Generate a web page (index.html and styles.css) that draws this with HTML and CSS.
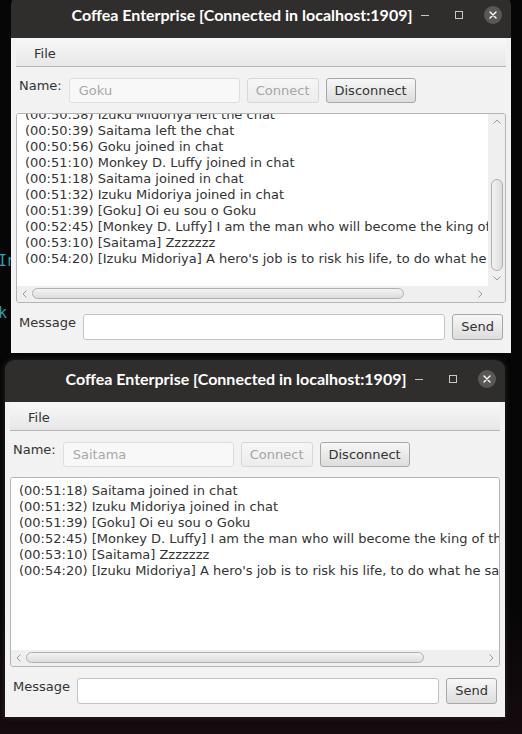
FILE: index.html
```html
<!DOCTYPE html>
<html>
<head>
<meta charset="utf-8">
<title>Coffea Enterprise</title>
<link rel="stylesheet" href="styles.css">
</head>
<body>
<div class="desktop">
  <pre class="terminal">Ir


k</pre>

  <div class="window win-back">
    <div class="titlebar">
      <div class="title">Coffea Enterprise [Connected in localhost:1909]</div>
      <span class="wm-min"></span>
      <span class="wm-max"></span>
      <svg class="wm-close" width="18" height="18" viewBox="0 0 18 18"><circle cx="9" cy="9" r="9" fill="#5a5856"/><path d="M6 6 L12 12 M12 6 L6 12" stroke="#fff" stroke-width="1.4" stroke-linecap="round"/></svg>
    </div>
    <div class="content">
      <div class="menubar"><span class="menu">File</span></div>
      <div class="row name-row">
        <span class="lbl">Name:</span>
        <div class="field field-disabled name-field">Goku</div>
        <div class="btn btn-disabled">Connect</div>
        <div class="btn">Disconnect</div>
      </div>
      <div class="textarea ta-v">
        <div class="viewport">
          <div class="lines scrolled">
            <div class="line">(00:50:38) Izuku Midoriya left the chat</div>
            <div class="line">(00:50:39) Saitama left the chat</div>
            <div class="line">(00:50:56) Goku joined in chat</div>
            <div class="line">(00:51:10) Monkey D. Luffy joined in chat</div>
            <div class="line">(00:51:18) Saitama joined in chat</div>
            <div class="line">(00:51:32) Izuku Midoriya joined in chat</div>
            <div class="line">(00:51:39) [Goku] Oi eu sou o Goku</div>
            <div class="line">(00:52:45) [Monkey D. Luffy] I am the man who will become the king of the pirates!</div>
            <div class="line">(00:53:10) [Saitama] Zzzzzzz</div>
            <div class="line">(00:54:20) [Izuku Midoriya] A hero's job is to risk his life, to do what he says he will do!</div>
          </div>
        </div>
        <div class="vscroll">
          <div class="varrow"><svg width="8" height="5" viewBox="0 0 8 5"><path d="M0.5 4.5 L4 1 L7.5 4.5" fill="none" stroke="#9a9a9a" stroke-width="1"/></svg></div>
          <div class="vtrack"><div class="thumb-v" style="margin-top:49px;height:92px"></div></div>
          <div class="varrow"><svg width="8" height="5" viewBox="0 0 8 5"><path d="M0.5 0.5 L4 4 L7.5 0.5" fill="none" stroke="#9a9a9a" stroke-width="1"/></svg></div>
        </div>
        <div class="hscroll">
          <div class="harrow"><svg width="5" height="8" viewBox="0 0 5 8"><path d="M4.5 0.5 L1 4 L4.5 7.5" fill="none" stroke="#9a9a9a" stroke-width="1"/></svg></div>
          <div class="htrack"><div class="thumb-h" style="width:372px"></div></div>
          <div class="harrow"><svg width="5" height="8" viewBox="0 0 5 8"><path d="M0.5 0.5 L4 4 L0.5 7.5" fill="none" stroke="#9a9a9a" stroke-width="1"/></svg></div>
        </div>
        <div class="corner"></div>
      </div>
      <div class="row msg-row">
        <span class="lbl">Message</span>
        <div class="field msg-field"></div>
        <div class="btn">Send</div>
      </div>
    </div>
  </div>

  <div class="window win-front">
    <div class="titlebar">
      <div class="title">Coffea Enterprise [Connected in localhost:1909]</div>
      <span class="wm-min"></span>
      <span class="wm-max"></span>
      <svg class="wm-close" width="18" height="18" viewBox="0 0 18 18"><circle cx="9" cy="9" r="9" fill="#5a5856"/><path d="M6 6 L12 12 M12 6 L6 12" stroke="#fff" stroke-width="1.4" stroke-linecap="round"/></svg>
    </div>
    <div class="content">
      <div class="menubar"><span class="menu">File</span></div>
      <div class="row name-row">
        <span class="lbl">Name:</span>
        <div class="field field-disabled name-field">Saitama</div>
        <div class="btn btn-disabled">Connect</div>
        <div class="btn">Disconnect</div>
      </div>
      <div class="textarea ta-h">
        <div class="viewport">
          <div class="lines">
            <div class="line">(00:51:18) Saitama joined in chat</div>
            <div class="line">(00:51:32) Izuku Midoriya joined in chat</div>
            <div class="line">(00:51:39) [Goku] Oi eu sou o Goku</div>
            <div class="line">(00:52:45) [Monkey D. Luffy] I am the man who will become the king of the pirates!</div>
            <div class="line">(00:53:10) [Saitama] Zzzzzzz</div>
            <div class="line">(00:54:20) [Izuku Midoriya] A hero's job is to risk his life, to do what he says he will do!</div>
          </div>
        </div>
        <div class="hscroll">
          <div class="harrow"><svg width="5" height="8" viewBox="0 0 5 8"><path d="M4.5 0.5 L1 4 L4.5 7.5" fill="none" stroke="#9a9a9a" stroke-width="1"/></svg></div>
          <div class="htrack"><div class="thumb-h" style="width:398px"></div></div>
          <div class="harrow"><svg width="5" height="8" viewBox="0 0 5 8"><path d="M0.5 0.5 L4 4 L0.5 7.5" fill="none" stroke="#9a9a9a" stroke-width="1"/></svg></div>
        </div>
      </div>
      <div class="row msg-row">
        <span class="lbl">Message</span>
        <div class="field msg-field"></div>
        <div class="btn">Send</div>
      </div>
    </div>
  </div>
</div>
</body>
</html>
```

FILE: styles.css
```css
* { box-sizing: border-box; }
html, body { margin: 0; padding: 0; }
body {
  width: 522px;
  height: 734px;
  overflow: hidden;
  background: linear-gradient(to bottom, #060606 0%, #060606 82%, #160b0e 100%);
  font-family: "DejaVu Sans", sans-serif;
  font-size: 13px;
  color: #333;
}
.desktop {
  position: relative;
  width: 522px;
  height: 734px;
}
.terminal {
  position: absolute;
  left: -2px;
  top: 253px;
  margin: 0;
  font-family: "DejaVu Sans Mono", monospace;
  font-size: 15px;
  line-height: 17.3px;
  letter-spacing: -1px;
  color: #2a9fb2;
}
.window {
  position: absolute;
  width: 500px;
  display: flex;
  flex-direction: column;
}
.win-back { left: 11px; top: -4px; }
.win-front {
  left: 5px;
  top: 360px;
  border-radius: 9px 9px 0 0;
  box-shadow: 0 0 6px rgba(90, 90, 90, 0.35);
}

/* title bar */
.titlebar {
  height: 42px;
  background: #302e2c;
  border-radius: 9px 9px 0 0;
  display: flex;
  align-items: center;
  padding-bottom: 5px;
}
.title {
  margin-left: 60px;
  width: 342px;
  font-family: "Lato", sans-serif;
  font-weight: bold;
  font-size: 16px;
  color: #ffffff;
  white-space: nowrap;
  text-align: center;
}
.wm-min {
  margin-left: 8px;
  margin-top: 2px;
  width: 8px;
  height: 1px;
  background: #c9c9c9;
}
.wm-max {
  margin-left: 26px;
  width: 8px;
  height: 8px;
  border: 1px solid #c9c9c9;
}
.wm-close {
  margin-left: 21px;
  display: block;
}

/* content */
.content {
  background: #f2f2f2;
  padding: 0 5px 13px;
  display: flex;
  flex-direction: column;
}
.menubar {
  height: 29px;
  background: linear-gradient(#f8f8f8, #e7e7e7);
  border-bottom: 1px solid #b6b6b6;
  padding: 8px 0 0 18px;
  line-height: 16px;
  color: #333;
}
.row {
  display: flex;
  align-items: flex-start;
  gap: 7px;
  padding: 0 3px;
}
.name-row { margin-top: 10px; }
.name-row .field,
.name-row .btn { margin-top: 1px; }
.msg-row { margin-top: 11px; }
.lbl {
  line-height: 18px;
  white-space: nowrap;
}
.field {
  height: 25px;
  border: 1px solid #c4c4c4;
  border-radius: 3px;
  background: #ffffff;
  padding: 0 9px;
  line-height: 23px;
  white-space: nowrap;
}
.field-disabled {
  color: #a8a8a8;
  border-color: #dedede;
  background: #f8f8f8;
}
.name-field { width: 171px; }
.msg-field { flex: 1; height: 26px; }
.btn {
  height: 25px;
  border: 1px solid #a8a8a8;
  border-radius: 3px;
  background: linear-gradient(#f7f7f7, #dddddd);
  padding: 0 8px;
  line-height: 23px;
  color: #333;
  white-space: nowrap;
}
.msg-row .btn { height: 26px; line-height: 24px; }
.btn-disabled {
  color: #a6a6a6;
  border-color: #d7d7d7;
  background: linear-gradient(#f6f6f6, #ececec);
}

/* text area */
.textarea {
  margin-top: 10px;
  height: 190px;
  border: 1px solid #b4b4b4;
  border-radius: 3px;
  background: #efefef;
  display: grid;
  overflow: hidden;
}
.ta-v {
  grid-template-columns: 471px 17px;
  grid-template-rows: 172px 16px;
}
.ta-h {
  grid-template-columns: 488px;
  grid-template-rows: 172px 16px;
}
.viewport {
  background: #ffffff;
  overflow: hidden;
  padding: 5px 8px 4px;
  white-space: nowrap;
  line-height: 16px;
  color: #333;
}
.line {
  white-space: pre;
  height: 16px;
}
.scrolled { margin-top: -12px; }

.vscroll {
  display: flex;
  flex-direction: column;
  background: #efefef;
}
.varrow {
  height: 16px;
  display: flex;
  align-items: center;
  justify-content: center;
  padding-left: 1px;
}
.vtrack {
  flex: 1;
  padding: 0 2px 0 3px;
}
.thumb-v {
  width: 12px;
  border: 1px solid #afafaf;
  border-radius: 6px;
  background: linear-gradient(to right, #f4f4f4, #dcdcdc);
}
.hscroll {
  display: flex;
  background: #efefef;
}
.harrow {
  width: 15px;
  display: flex;
  align-items: center;
  justify-content: center;
}
.htrack {
  flex: 1;
  padding-top: 2px;
}
.thumb-h {
  height: 11px;
  border: 1px solid #afafaf;
  border-radius: 6px;
  background: linear-gradient(#f4f4f4, #dcdcdc);
}
.corner { background: #efefef; }
```
